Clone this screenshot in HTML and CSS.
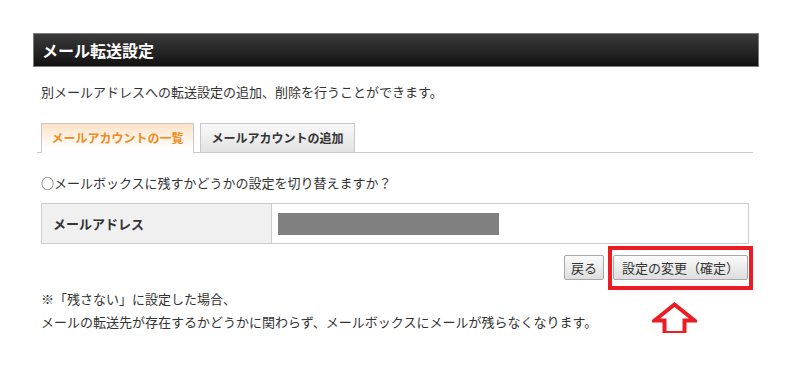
FILE: index.html
```html
<!DOCTYPE html>
<html lang="ja">
<head>
<meta charset="utf-8">
<title>メール転送設定</title>
<link rel="stylesheet" href="styles.css">
</head>
<body>
<div class="panel">
  <h1 class="title">メール転送設定</h1>
  <div class="content">
    <p class="desc">別メールアドレスへの転送設定の追加、削除を行うことができます。</p>
    <div class="tabs">
      <div class="tab tab-active">メールアカウントの一覧</div>
      <div class="tab">メールアカウントの追加</div>
    </div>
    <p class="question">○メールボックスに残すかどうかの設定を切り替えますか？</p>
    <div class="table">
      <div class="th">メールアドレス</div>
      <div class="td"><span class="masked"></span></div>
    </div>
    <div class="actions">
      <button class="btn btn-back">戻る</button>
      <span class="highlight">
        <button class="btn btn-wide">設定の変更（確定）</button>
        <svg class="arrow" width="45" height="34" viewBox="0 0 45 34" aria-hidden="true">
          <path d="M22.5 2.5 L2.5 18.5 L12.5 18.5 L12.5 31 L32.5 31 L32.5 18.5 L42.5 18.5 Z" fill="#fff" stroke="#ec1c24" stroke-width="4" stroke-linejoin="miter"/>
        </svg>
      </span>
    </div>
    <p class="note">※「残さない」に設定した場合、<br>メールの転送先が存在するかどうかに関わらず、メールボックスにメールが残らなくなります。</p>
  </div>
</div>
</body>
</html>
```

FILE: styles.css
```css
html, body {
  margin: 0;
  padding: 0;
  background: #fff;
}

body {
  font-family: "Noto Sans CJK JP", "Noto Sans", sans-serif;
  font-size: 13px;
  color: #333;
}

.panel {
  margin: 33px 0 0 33px;
  width: 726px;
}

.title {
  margin: 0;
  height: 32px;
  border: 1px solid #7c7c7c;
  background: linear-gradient(#3b3b3b, #121212);
  color: #fff;
  font-size: 16px;
  font-weight: bold;
  line-height: 32px;
  padding-left: 8px;
}

.content {
  padding-left: 8px;
}

.desc {
  margin: 15px 0 0;
  line-height: 20px;
}

.tabs {
  display: flex;
  gap: 6px;
  margin: 21px 0 0 -4px;
  padding-left: 4px;
  width: 712px;
  border-bottom: 1px solid #cccccc;
}

.tab {
  box-sizing: border-box;
  height: 29px;
  border: 1px solid #c8c8c8;
  border-bottom: none;
  background: linear-gradient(#f9f9f9, #e2e2e2);
  font-size: 12px;
  font-weight: bold;
  line-height: 28px;
  text-align: center;
  color: #333;
  width: 155px;
}

.tab-active {
  width: 153px;
  height: 30px;
  margin-bottom: -1px;
  background: linear-gradient(#fde2c6, #ffffff 85%);
  color: #f08a1c;
}

.question {
  margin: 20px 0 0;
  line-height: 20px;
}

.table {
  display: flex;
  margin-top: 10px;
  width: 706px;
  border: 1px solid #cccccc;
}

.th {
  width: 218px;
  padding-left: 11px;
  border-right: 1px solid #cccccc;
  background: #f0f0f0;
  font-weight: bold;
  line-height: 39px;
  height: 39px;
}

.td {
  flex: 1;
  padding: 9px 6px 8px;
}

.masked {
  display: block;
  width: 221px;
  height: 22px;
  background: #808080;
}

.actions {
  display: flex;
  justify-content: flex-end;
  gap: 9px;
  width: 707px;
  margin-top: 11px;
}

.btn {
  height: 25px;
  padding: 0 5px;
  border: 1px solid #a8a8a8;
  border-radius: 2px;
  background: linear-gradient(#fbfbfb, #dddddd);
  font-family: "Noto Sans CJK JP", "Noto Sans", sans-serif;
  font-size: 13px;
  color: #333;
  line-height: 23px;
}

.btn-back {
  padding: 0 6px;
}

.btn-wide {
  padding: 0 8px;
  display: block;
}

.highlight {
  position: relative;
  display: block;
}

.highlight::after {
  content: "";
  position: absolute;
  left: -5px;
  right: -5px;
  top: -9px;
  bottom: -10px;
  border: 4px solid #ec1c24;
}

.arrow {
  position: absolute;
  left: 39px;
  top: 47px;
}

.note {
  margin: 7px 0 0;
  line-height: 23px;
}
```
